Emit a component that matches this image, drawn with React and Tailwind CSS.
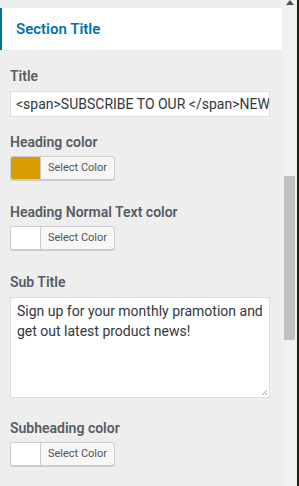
export default function App() {
  const ColorBtn = ({ color }) => (
    <div className="flex h-[24px] w-[105px] overflow-hidden rounded-[3px] border border-[#cccccc] bg-[#f7f7f7] shadow-[0_1px_0_#cccccc]">
      <div className="w-[30px] border-r border-[#cccccc]" style={{ background: color }} />
      <div className="flex flex-1 items-center justify-center text-[11px] text-[#555555]">Select Color</div>
    </div>
  );
  const Label = ({ children, className = "" }) => (
    <div className={"text-[14px] font-semibold leading-[20px] text-[#555d66] " + className}>{children}</div>
  );
  return (
    <div className="flex h-[486px] w-[299px] overflow-hidden bg-[#eeeeee] font-['Roboto',sans-serif]">
      <div className="flex w-[282px] flex-col">
        <div className="mt-[8px] flex h-[42px] items-center border-l-2 border-[#0073aa] bg-white pl-[14px] text-[15px] font-semibold text-[#0073aa]">
          Section Title
        </div>
        <div className="flex flex-col px-[10px]">
          <Label className="mt-[16px]">Title</Label>
          <div className="mt-[5px] flex h-[26px] w-[260px] items-center overflow-hidden whitespace-nowrap border border-[#dddddd] bg-white pl-[5px] text-[14px] text-[#32373c]">
            &lt;span&gt;SUBSCRIBE TO OUR &lt;/span&gt;NEW
          </div>
          <Label className="mt-[15px]">Heading color</Label>
          <div className="mt-[4px]"><ColorBtn color="#d89b00" /></div>
          <Label className="mt-[22px]">Heading Normal Text color</Label>
          <div className="mt-[4px]"><ColorBtn color="#ffffff" /></div>
          <Label className="mt-[22px]">Sub Title</Label>
          <div className="relative mt-[5px] h-[101px] w-[260px] border border-[#dddddd] bg-white px-[6px] pt-[3px] text-[14px] leading-[20px] text-[#32373c]">
            Sign up for your monthly pramotion and get out latest product news!
            <svg className="absolute bottom-[1px] right-[1px]" width="8" height="8" viewBox="0 0 8 8">
              <path d="M7 2 L2 7 M7 5 L5 7" stroke="#999" strokeWidth="1" />
            </svg>
          </div>
          <Label className="mt-[20px]">Subheading color</Label>
          <div className="mt-[4px]"><ColorBtn color="#ffffff" /></div>
        </div>
      </div>
      <div className="relative w-[15px] bg-[#f1f1f1]">
        <svg className="absolute left-[4px] top-0" width="8" height="5" viewBox="0 0 8 5">
          <path d="M4 0 L8 5 L0 5 Z" fill="#505050" />
        </svg>
        <div className="absolute left-[2px] top-[176px] h-[164px] w-[11px] bg-[#c1c1c1]" />
      </div>
      <div className="w-[2px] bg-[#1e1a14]" />
    </div>
  );
}
